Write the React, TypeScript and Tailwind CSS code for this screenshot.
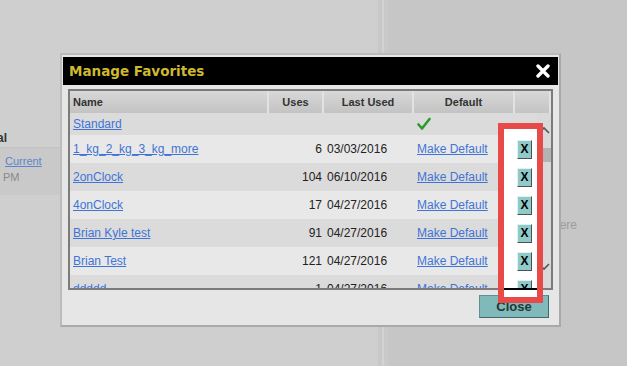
import React from "react"

type Fav = {
  name: string
  uses: string
  lastUsed: string
  isDefault?: boolean
}

const favorites: Fav[] = [
  { name: "Standard", uses: "", lastUsed: "", isDefault: true },
  { name: "1_kg_2_kg_3_kg_more", uses: "6", lastUsed: "03/03/2016" },
  { name: "2onClock", uses: "104", lastUsed: "06/10/2016" },
  { name: "4onClock", uses: "17", lastUsed: "04/27/2016" },
  { name: "Brian Kyle test", uses: "91", lastUsed: "04/27/2016" },
  { name: "Brian Test", uses: "121", lastUsed: "04/27/2016" },
  { name: "ddddd", uses: "1", lastUsed: "04/27/2016" },
]

const CheckMark = () => (
  <svg width="14" height="14" viewBox="0 0 14 14">
    <polyline
      points="1.5,7.5 5,11.5 12.5,2"
      fill="none"
      stroke="#2c9a2c"
      strokeWidth="2.6"
      strokeLinecap="round"
      strokeLinejoin="round"
    />
  </svg>
)

const CloseIcon = () => (
  <svg width="14" height="14" viewBox="0 0 14 14">
    <path d="M2 2 L12 12 M12 2 L2 12" stroke="#fff" strokeWidth="3.4" strokeLinecap="round" />
  </svg>
)

const Chevron = ({ up }: { up: boolean }) => (
  <svg width="13" height="10" viewBox="0 0 13 10">
    <polyline
      points={up ? "1,8 6,3 11,8" : "1,2 6,7 11,2"}
      fill="none"
      stroke="#555"
      strokeWidth="1.6"
    />
  </svg>
)

const HeaderCell = ({ label, left }: { label: string; left?: boolean }) => (
  <div
    className={`flex items-center h-full border-r-2 border-[#e2e2e2] bg-gradient-to-b from-[#d8d8d8] to-[#c3c3c3] text-[11px] font-bold text-[#333] ${
      left ? "justify-start pl-[3px]" : "justify-center"
    }`}
  >
    {label}
  </div>
)

const FavRow = ({ fav, index }: { fav: Fav; index: number }) => (
  <div
    className={`grid grid-cols-[199px_55px_90px_101px_23px] items-center shrink-0 ${
      index === 0 ? "h-[22px]" : "h-[28px]"
    } ${index % 2 === 0 ? "bg-[#dbdbdb]" : "bg-[#e8e8e8]"}`}
  >
    <a className="pl-[3px] text-[12px] text-[#3f74d6] underline truncate">{fav.name}</a>
    <div className="pr-[2px] text-right text-[12px] text-[#222]">{fav.uses}</div>
    <div className="pl-[3px] text-[12px] text-[#222]">{fav.lastUsed}</div>
    <div className="pl-[3px] flex items-center">
      {fav.isDefault ? (
        <CheckMark />
      ) : (
        <a className="text-[12px] text-[#3f74d6] underline">Make Default</a>
      )}
    </div>
    <div className="pl-[2px] flex items-center">
      {!fav.isDefault && (
        <button className="relative z-10 w-[15px] h-[19px] flex items-center justify-center bg-[#8ecaca] border border-t-[#e0f2f2] border-l-[#e0f2f2] border-r-[#505050] border-b-[#505050] text-[12px] font-bold text-black leading-none">
          X
        </button>
      )}
    </div>
  </div>
)

export default function App() {
  return (
    <div className="relative w-[627px] h-[366px] overflow-hidden flex bg-[#cfcfcf] font-['Liberation_Sans',Arial,sans-serif]">
      {/* page behind the dialog */}
      <div className="w-[378px] flex flex-col">
        <div className="mt-[129px] -ml-[3px] h-[18px] text-[12px] font-bold text-[#333]">al</div>
        <div className="h-[48px] bg-[#c9c9c9] border-t border-[#c2c2c2] flex flex-col pl-[5px] pt-[6px]">
          <a className="text-[11px] text-[#5a86cc] underline leading-[14px]">Current</a>
          <span className="-ml-[2px] mt-[2px] text-[11px] text-[#8a8a8a] leading-[14px]">PM</span>
        </div>
      </div>
      <div className="w-[10px] flex">
        <div className="w-[4px] bg-[#c8c8c8]" />
        <div className="w-[2px] bg-[#d3d3d3]" />
        <div className="flex-1 bg-[#c9c9c9]" />
      </div>
      <div className="flex-1 bg-[#c6c6c6] pl-[165px] pt-[212px]">
        <span className="text-[12px] text-[#9c9c9c]">here</span>
      </div>

      {/* dialog */}
      <div className="absolute left-[60px] top-[53px] w-[501px] h-[274px] flex flex-col bg-[#e6e6e6] border-2 border-[#bcbcbc] border-r-[#a9a9a9] border-b-[#a9a9a9] px-[1px] pt-[2px]">
        <div className="h-[28px] shrink-0 bg-black flex items-center justify-between pl-[6px] pr-[8px]">
          <span className="font-['DejaVu_Sans',Verdana,sans-serif] text-[13.5px] font-bold text-[#cdb92f]">
            Manage Favorites
          </span>
          <CloseIcon />
        </div>

        <div className="ml-[5px] mt-[4px] w-[485px] h-[201px] shrink-0 flex flex-col border-2 border-[#7b7b7b]">
          <div className="h-[22px] shrink-0 grid grid-cols-[199px_55px_90px_101px_36px]">
            <HeaderCell label="Name" left />
            <HeaderCell label="Uses" />
            <HeaderCell label="Last Used" />
            <HeaderCell label="Default" />
            <HeaderCell label="" />
          </div>
          <div className="flex h-[175px]">
            <div className="w-[468px] flex flex-col overflow-hidden">
              {favorites.map((fav, i) => (
                <FavRow key={fav.name} fav={fav} index={i} />
              ))}
            </div>
            <div className="flex-1 bg-[#d9d9d9] flex flex-col items-center pt-[12px]">
              <Chevron up />
              <div className="mt-[13px] ml-[6px] w-[8px] h-[14px] bg-[#b3b3b3]" />
              <div className="mt-[100px]">
                <Chevron up={false} />
              </div>
            </div>
          </div>
        </div>

        <div className="flex justify-end pr-[9px] mt-[5px]">
          <button className="w-[70px] h-[23px] bg-[#80b9b9] border border-[#5e9292] border-r-[#406a6a] border-b-[#406a6a] text-[13px] font-bold text-[#253636]">
            Close
          </button>
        </div>
      </div>

      {/* red annotation box */}
      <div className="absolute left-[498px] top-[123px] w-[45px] h-[180px] border-[6px] border-[#e84a4a] bg-white">
        <div className="mt-[159px] h-[2px] bg-black" />
      </div>
    </div>
  )
}
